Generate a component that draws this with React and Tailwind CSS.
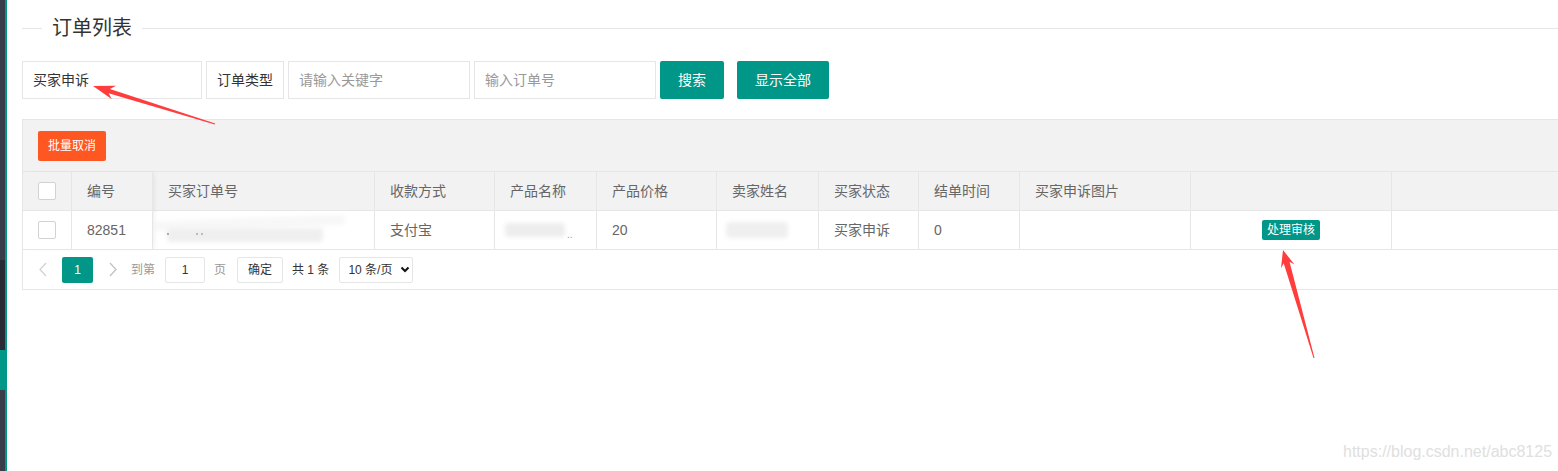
import React from "react";

const FONT = "font-['Liberation_Sans','Noto_Sans_CJK_SC',sans-serif]";

// fixed columns (left) and scrolling columns
const FIXED_COLS = [
  { key: "check", w: "w-[49px]" },
  { key: "id", w: "w-[81px]", title: "编号" },
];
const MAIN_COLS = [
  { key: "orderNo", w: "w-[222px]", title: "买家订单号" },
  { key: "pay", w: "w-[120px]", title: "收款方式" },
  { key: "product", w: "w-[102px]", title: "产品名称" },
  { key: "price", w: "w-[120px]", title: "产品价格" },
  { key: "seller", w: "w-[102px]", title: "卖家姓名" },
  { key: "status", w: "w-[100px]", title: "买家状态" },
  { key: "time", w: "w-[101px]", title: "结单时间" },
  { key: "img", w: "w-[171px]", title: "买家申诉图片" },
  { key: "op", w: "w-[201px]", title: "" },
  { key: "more", w: "w-[240px]", title: "" },
];

const row = { pay: "支付宝", price: "20", status: "买家申诉", time: "0" };

const Checkbox = () => (
  <span className="block w-[18px] h-[18px] border border-[#d2d2d2] rounded-[2px] bg-white" />
);

const Smudge = ({ className }) => (
  <div className={`rounded-sm blur-[2px] ${className}`} />
);

const Chevron = ({ dir, color }) => (
  <svg width="10" height="15" viewBox="0 0 10 15" fill="none">
    {dir === "left" ? (
      <polyline points="8,1 2,7.5 8,14" stroke={color} strokeWidth="1.3" />
    ) : (
      <polyline points="2,1 8,7.5 2,14" stroke={color} strokeWidth="1.3" />
    )}
  </svg>
);

const Cell = ({ w, children, center, header }) => (
  <div
    className={`${w} shrink-0 h-full border-r border-[#e6e6e6] flex items-center ${
      center ? "justify-center" : "px-[15px]"
    } ${header ? "bg-[#f2f2f2]" : "bg-white"} text-[14px] text-[#666] leading-[20px]`}
  >
    {children}
  </div>
);

const dataCell = (key) => {
  switch (key) {
    case "orderNo":
      return (
        <div className="relative w-[190px] h-[28px] -ml-[15px]">
          <Smudge className="absolute left-[2px] top-[2px] w-[190px] h-[10px] bg-[#f7f7f7] -rotate-2" />
          <Smudge className="absolute left-[14px] top-[12px] w-[156px] h-[14px] bg-[#efefef]" />
          <span className="absolute left-[14px] top-[17px] w-[2px] h-[2px] bg-[#aaa]" />
          <span className="absolute left-[43px] top-[17px] w-[2px] h-[2px] bg-[#bbb]" />
          <span className="absolute left-[48px] top-[17px] w-[2px] h-[2px] bg-[#bbb]" />
        </div>
      );
    case "product":
      return (
        <div className="relative w-[70px] h-[20px] -ml-[5px]">
          <Smudge className="absolute left-0 top-[3px] w-[60px] h-[14px] bg-[#ededed]" />
          <span className="absolute left-[62px] top-[10px] text-[10px] leading-[10px] text-[#999]">..</span>
        </div>
      );
    case "seller":
      return (
        <div className="relative w-[70px] h-[22px] -ml-[6px]">
          <Smudge className="absolute left-0 top-[3px] w-[62px] h-[16px] bg-[#efefef]" />
        </div>
      );
    case "op":
      return (
        <button className="h-[20px] px-[5px] rounded-[2px] bg-[#009688] text-white text-[12px] leading-[20px]">
          处理审核
        </button>
      );
    default:
      return row[key] || "";
  }
};

const Arrow = ({ points }) => <polygon points={points} fill="#ff3d3d" />;

export default function App() {
  return (
    <div className={`${FONT} relative flex w-full h-[471px] overflow-hidden bg-white`}>
      {/* side nav edge */}
      <div className="w-[5px] shrink-0 flex flex-col">
        <div className="h-[260px] bg-[#393d49]" />
        <div className="h-[90px] bg-[#282b33]" />
        <div className="h-[40px] bg-[#009688]" />
        <div className="flex-1 bg-[#393d49]" />
      </div>
      <div className="w-[2px] shrink-0 bg-[#009688]" />

      <div className="flex-1 min-w-0 pl-[15px]">
        {/* legend */}
        <div className="flex items-center h-[22px] mt-[17px]">
          <div className="w-[20px] h-px bg-[#e6e6e6]" />
          <span className="px-[10px] text-[20px] leading-[22px] text-[#333]">订单列表</span>
          <div className="flex-1 h-px bg-[#e6e6e6]" />
        </div>

        {/* search */}
        <div className="flex items-center gap-[4px] mt-[22px] h-[38px] text-[14px]">
          <div className="w-[180px] h-[38px] border border-[#e6e6e6] flex items-center pl-[10px] text-[#333]">
            买家申诉
          </div>
          <div className="w-[78px] h-[38px] border border-[#e6e6e6] flex items-center justify-center text-[#333]">
            订单类型
          </div>
          <div className="w-[182px] h-[38px] border border-[#e6e6e6] flex items-center pl-[10px] text-[#999]">
            请输入关键字
          </div>
          <div className="w-[182px] h-[38px] border border-[#e6e6e6] flex items-center pl-[10px] text-[#999]">
            输入订单号
          </div>
          <button className="w-[64px] h-[38px] rounded-[2px] bg-[#009688] text-white">搜索</button>
          <button className="ml-[9px] w-[92px] h-[38px] rounded-[2px] bg-[#009688] text-white">
            显示全部
          </button>
        </div>

        {/* table */}
        <div className="mt-[20px] w-[1600px] border border-[#e6e6e6]">
          <div className="h-[52px] bg-[#f2f2f2] border-b border-[#e6e6e6] flex items-center pl-[15px]">
            <button className="h-[30px] px-[10px] rounded-[2px] bg-[#ff5722] text-white text-[12px]">
              批量取消
            </button>
          </div>

          <div className="flex">
            <div className="relative z-10 flex flex-col shadow-[3px_0_5px_-2px_rgba(0,0,0,0.07)]">
              <div className="flex h-[39px] border-b border-[#e6e6e6]">
                {FIXED_COLS.map((c) => (
                  <Cell key={c.key} w={c.w} header center={c.key === "check"}>
                    {c.key === "check" ? <Checkbox /> : c.title}
                  </Cell>
                ))}
              </div>
              <div className="flex h-[39px] border-b border-[#e6e6e6]">
                <Cell w="w-[49px]" center>
                  <Checkbox />
                </Cell>
                <Cell w="w-[81px]">82851</Cell>
              </div>
            </div>
            <div className="flex flex-col">
              <div className="flex h-[39px] border-b border-[#e6e6e6]">
                {MAIN_COLS.map((c) => (
                  <Cell key={c.key} w={c.w} header>
                    {c.title}
                  </Cell>
                ))}
              </div>
              <div className="flex h-[39px] border-b border-[#e6e6e6]">
                {MAIN_COLS.map((c) => (
                  <Cell key={c.key} w={c.w} center={c.key === "op"}>
                    {dataCell(c.key)}
                  </Cell>
                ))}
              </div>
            </div>
          </div>

          {/* pagination */}
          <div className="h-[39px] flex items-center pl-[15px] text-[12px] leading-[16px]">
            <Chevron dir="left" color="#d2d2d2" />
            <span className="ml-[14px] w-[31px] h-[26px] rounded-[2px] bg-[#009688] text-white flex items-center justify-center">
              1
            </span>
            <span className="ml-[15px]">
              <Chevron dir="right" color="#c2c2c2" />
            </span>
            <span className="ml-[13px] text-[#999]">到第</span>
            <div className="ml-[10px] w-[40px] h-[26px] border border-[#e6e6e6] rounded-[2px] flex items-center justify-center text-[#333]">
              1
            </div>
            <span className="ml-[9px] text-[#999]">页</span>
            <div className="ml-[11px] w-[46px] h-[26px] border border-[#e6e6e6] rounded-[2px] flex items-center justify-center text-[#333]">
              确定
            </div>
            <span className="ml-[9px] text-[#333]">共 1 条</span>
            <div className="ml-[10px] w-[74px] h-[26px] border border-[#e6e6e6] rounded-[2px] flex items-center pl-[8px] text-[#333]">
              10 条/页
              <svg className="ml-[8px]" width="10" height="7" viewBox="0 0 10 7" fill="none">
                <polyline points="1.5,1.5 5,5 8.5,1.5" stroke="#111" strokeWidth="2" />
              </svg>
            </div>
          </div>
        </div>
      </div>

      {/* annotation arrows */}
      <svg className="absolute inset-0 pointer-events-none" width="1558" height="471">
        <Arrow points="93,86 116.1,85.8 109.9,89 215.2,123.5 214.8,124.5 108.6,93.2 111.9,99.2" />
        <Arrow points="1283,250 1294.4,264.4 1289.5,261.7 1314.5,357.9 1313.5,358.1 1283.7,263.3 1281,268.2" />
      </svg>

      <div className="absolute left-[1343px] top-[443px] font-['Liberation_Sans',sans-serif] text-[16px] leading-[18px] text-[#e0e0e0]">
        https://blog.csdn.net/abc8125
      </div>
    </div>
  );
}
